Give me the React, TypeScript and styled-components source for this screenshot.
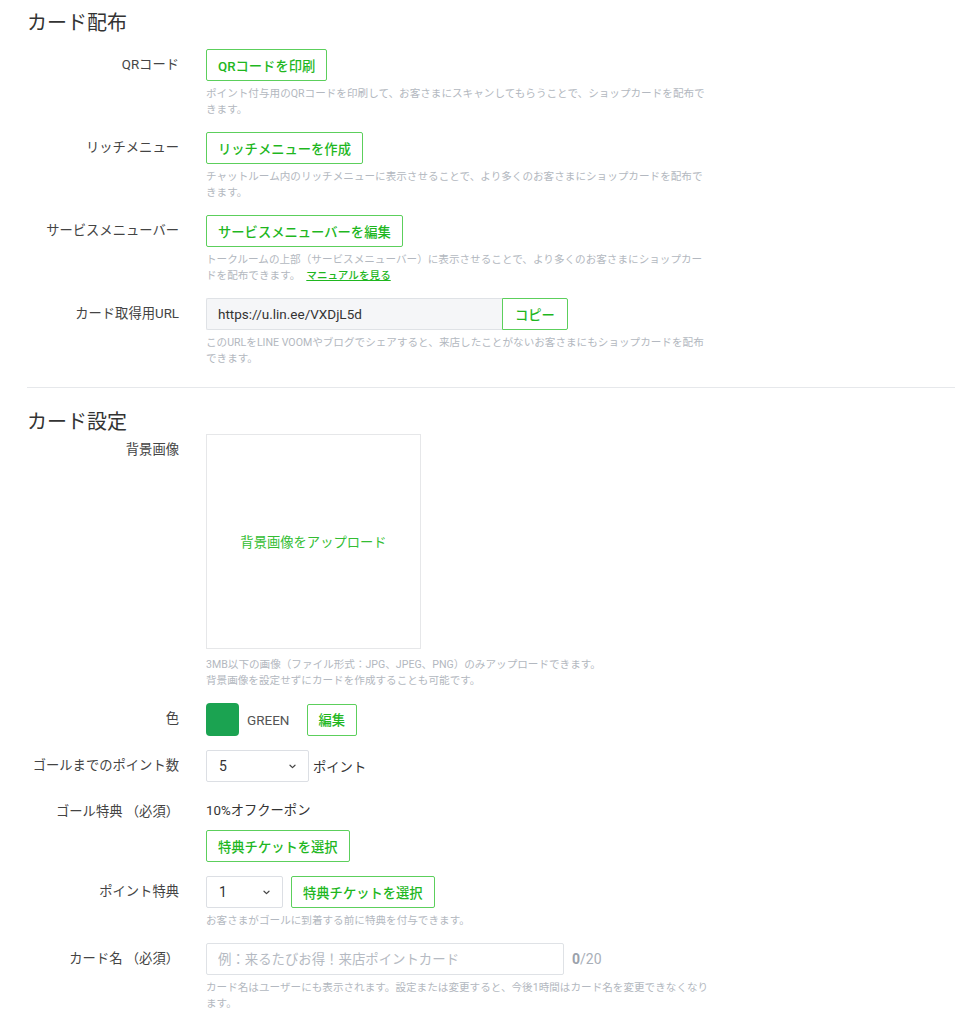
import React from "react";
import styled, { createGlobalStyle } from "styled-components";

const GlobalStyle = createGlobalStyle`
  html, body { margin: 0; padding: 0; background: #fff; }
  body {
    font-family: Roboto, "Noto Sans CJK JP", sans-serif;
    color: #333;
    -webkit-font-smoothing: antialiased;
  }
  * { box-sizing: border-box; }
`;

const Page = styled.div`
  padding: 0 0 40px 27px;
`;

const Heading = styled.h2<{ $top: number; $bottom: number }>`
  margin: ${(p) => p.$top}px 0 ${(p) => p.$bottom}px;
  font-size: 20px;
  line-height: 24px;
  font-weight: 400;
  color: #333;
`;

const Divider = styled.hr`
  margin: 20px 0 0;
  border: none;
  border-top: 1px solid #e6e8eb;
`;

const Rows = styled.div<{ $gap: number }>`
  display: flex;
  flex-direction: column;
  gap: ${(p) => p.$gap}px;
`;

const Row = styled.div`
  display: grid;
  grid-template-columns: 152px 1fr;
  column-gap: 27px;
`;

const Label = styled.div`
  text-align: right;
  font-size: 13.3px;
  line-height: 32px;
  color: #444;
  white-space: nowrap;
`;

const Field = styled.div`
  display: flex;
  flex-direction: column;
  align-items: flex-start;
  min-width: 0;
`;

const Inline = styled.div<{ $gap?: number }>`
  display: flex;
  align-items: center;
  gap: ${(p) => p.$gap ?? 8}px;
`;

const OutlineButton = styled.button<{ $top?: number }>`
  height: 32px;
  margin-top: ${(p) => p.$top ?? 0}px;
  padding: 0 11px;
  border: 1px solid #5ccf5c;
  border-radius: 2px;
  background: #fff;
  color: #1fb71f;
  font-family: inherit;
  font-size: 13.3px;
  font-weight: 500;
  white-space: nowrap;
  cursor: pointer;
`;

const AttachedButton = styled(OutlineButton)`
  border-radius: 0 2px 2px 0;
  padding: 0 12px;
`;

const Help = styled.p<{ $top?: number }>`
  margin: ${(p) => p.$top ?? 5}px 0 0;
  width: 504px;
  font-size: 10.6px;
  line-height: 16px;
  color: #b3b8c0;
`;

const Link = styled.a`
  display: inline-block;
  margin-left: 6px;
  color: #1fb71f;
  font-weight: 500;
  text-decoration: underline;
  cursor: pointer;
`;

const UrlGroup = styled.div`
  display: flex;
`;

const UrlField = styled.input`
  width: 296px;
  height: 32px;
  padding: 0 11px;
  border: 1px solid #dfe2e6;
  border-right: none;
  border-radius: 2px 0 0 2px;
  background: #f5f6f8;
  color: #333;
  font-family: inherit;
  font-size: 13.5px;
  outline: none;
`;

const UploadBox = styled.button`
  width: 215px;
  height: 215px;
  border: 1px solid #e6e7e9;
  background: #fff;
  color: #33bd33;
  font-family: inherit;
  font-size: 13.3px;
  cursor: pointer;
`;

const Swatch = styled.div<{ $color: string }>`
  width: 33px;
  height: 33px;
  border-radius: 4px;
  background: ${(p) => p.$color};
`;

const ColorName = styled.span`
  font-size: 13.5px;
  color: #555;
  margin-right: 9px;
`;

const SelectBox = styled.div<{ $width: number }>`
  width: ${(p) => p.$width}px;
  height: 32px;
  display: flex;
  align-items: center;
  justify-content: space-between;
  padding: 0 12px;
  border: 1px solid #dcdfe4;
  border-radius: 2px;
  background: #fff;
  font-size: 14px;
  color: #333;
`;

const Unit = styled.span`
  font-size: 13.3px;
  color: #333;
`;

const PlainText = styled.div`
  font-size: 13.3px;
  line-height: 30px;
  color: #333;
`;

const TextInput = styled.input`
  width: 358px;
  height: 32px;
  padding: 0 11px;
  border: 1px solid #dfe2e6;
  border-radius: 2px;
  background: #fff;
  font-family: inherit;
  font-size: 13.4px;
  color: #333;
  outline: none;
  &::placeholder {
    color: #b5bac2;
  }
`;

const Counter = styled.span`
  margin-left: 4px;
  font-size: 14px;
  color: #a9afb8;
  b {
    font-weight: 700;
    color: #9aa1ab;
  }
`;

const Chevron = () => (
  <svg width="7" height="5" viewBox="0 0 7 5" fill="none">
    <path d="M1 1.2 L3.5 3.6 L6 1.2" stroke="#444" strokeWidth="1.2" strokeLinecap="round" strokeLinejoin="round" />
  </svg>
);

const Select = ({ value, width }: { value: string; width: number }) => (
  <SelectBox $width={width}>
    <span>{value}</span>
    <Chevron />
  </SelectBox>
);

export default function App() {
  return (
    <>
      <GlobalStyle />
      <Page>
        <Heading $top={11} $bottom={14}>カード配布</Heading>
        <Rows $gap={14}>
          <Row>
            <Label>QRコード</Label>
            <Field>
              <OutlineButton>QRコードを印刷</OutlineButton>
              <Help>
                ポイント付与用のQRコードを印刷して、お客さまにスキャンしてもらうことで、ショップカードを配布できます。
              </Help>
            </Field>
          </Row>
          <Row>
            <Label>リッチメニュー</Label>
            <Field>
              <OutlineButton>リッチメニューを作成</OutlineButton>
              <Help>
                チャットルーム内のリッチメニューに表示させることで、より多くのお客さまにショップカードを配布できます。
              </Help>
            </Field>
          </Row>
          <Row>
            <Label>サービスメニューバー</Label>
            <Field>
              <OutlineButton>サービスメニューバーを編集</OutlineButton>
              <Help>
                トークルームの上部（サービスメニューバー）に表示させることで、より多くのお客さまにショップカードを配布できます。
                <Link>マニュアルを見る</Link>
              </Help>
            </Field>
          </Row>
          <Row>
            <Label>カード取得用URL</Label>
            <Field>
              <UrlGroup>
                <UrlField readOnly value="https://u.lin.ee/VXDjL5d" />
                <AttachedButton>コピー</AttachedButton>
              </UrlGroup>
              <Help>
                このURLをLINE VOOMやブログでシェアすると、来店したことがないお客さまにもショップカードを配布できます。
              </Help>
            </Field>
          </Row>
        </Rows>

        <Divider />

        <Heading $top={22} $bottom={0}>カード設定</Heading>
        <Rows $gap={14}>
          <Row>
            <Label>背景画像</Label>
            <Field>
              <UploadBox>背景画像をアップロード</UploadBox>
              <Help $top={8}>
                3MB以下の画像（ファイル形式：JPG、JPEG、PNG）のみアップロードできます。
                <br />
                背景画像を設定せずにカードを作成することも可能です。
              </Help>
            </Field>
          </Row>
          <Row>
            <Label>色</Label>
            <Field>
              <Inline $gap={8}>
                <Swatch $color="#1ba351" />
                <ColorName>GREEN</ColorName>
                <OutlineButton>編集</OutlineButton>
              </Inline>
            </Field>
          </Row>
          <Row>
            <Label>ゴールまでのポイント数</Label>
            <Field>
              <Inline $gap={4}>
                <Select value="5" width={103} />
                <Unit>ポイント</Unit>
              </Inline>
            </Field>
          </Row>
          <Row>
            <Label>ゴール特典 （必須）</Label>
            <Field>
              <PlainText>10%オフクーポン</PlainText>
              <OutlineButton $top={4}>特典チケットを選択</OutlineButton>
            </Field>
          </Row>
          <Row>
            <Label>ポイント特典</Label>
            <Field>
              <Inline $gap={8}>
                <Select value="1" width={77} />
                <OutlineButton>特典チケットを選択</OutlineButton>
              </Inline>
              <Help>お客さまがゴールに到着する前に特典を付与できます。</Help>
            </Field>
          </Row>
          <Row>
            <Label>カード名 （必須）</Label>
            <Field>
              <Inline $gap={4}>
                <TextInput placeholder="例：来るたびお得！来店ポイントカード" />
                <Counter>
                  <b>0</b>/20
                </Counter>
              </Inline>
              <Help>
                カード名はユーザーにも表示されます。設定または変更すると、今後1時間はカード名を変更できなくなります。
              </Help>
            </Field>
          </Row>
        </Rows>
      </Page>
    </>
  );
}
